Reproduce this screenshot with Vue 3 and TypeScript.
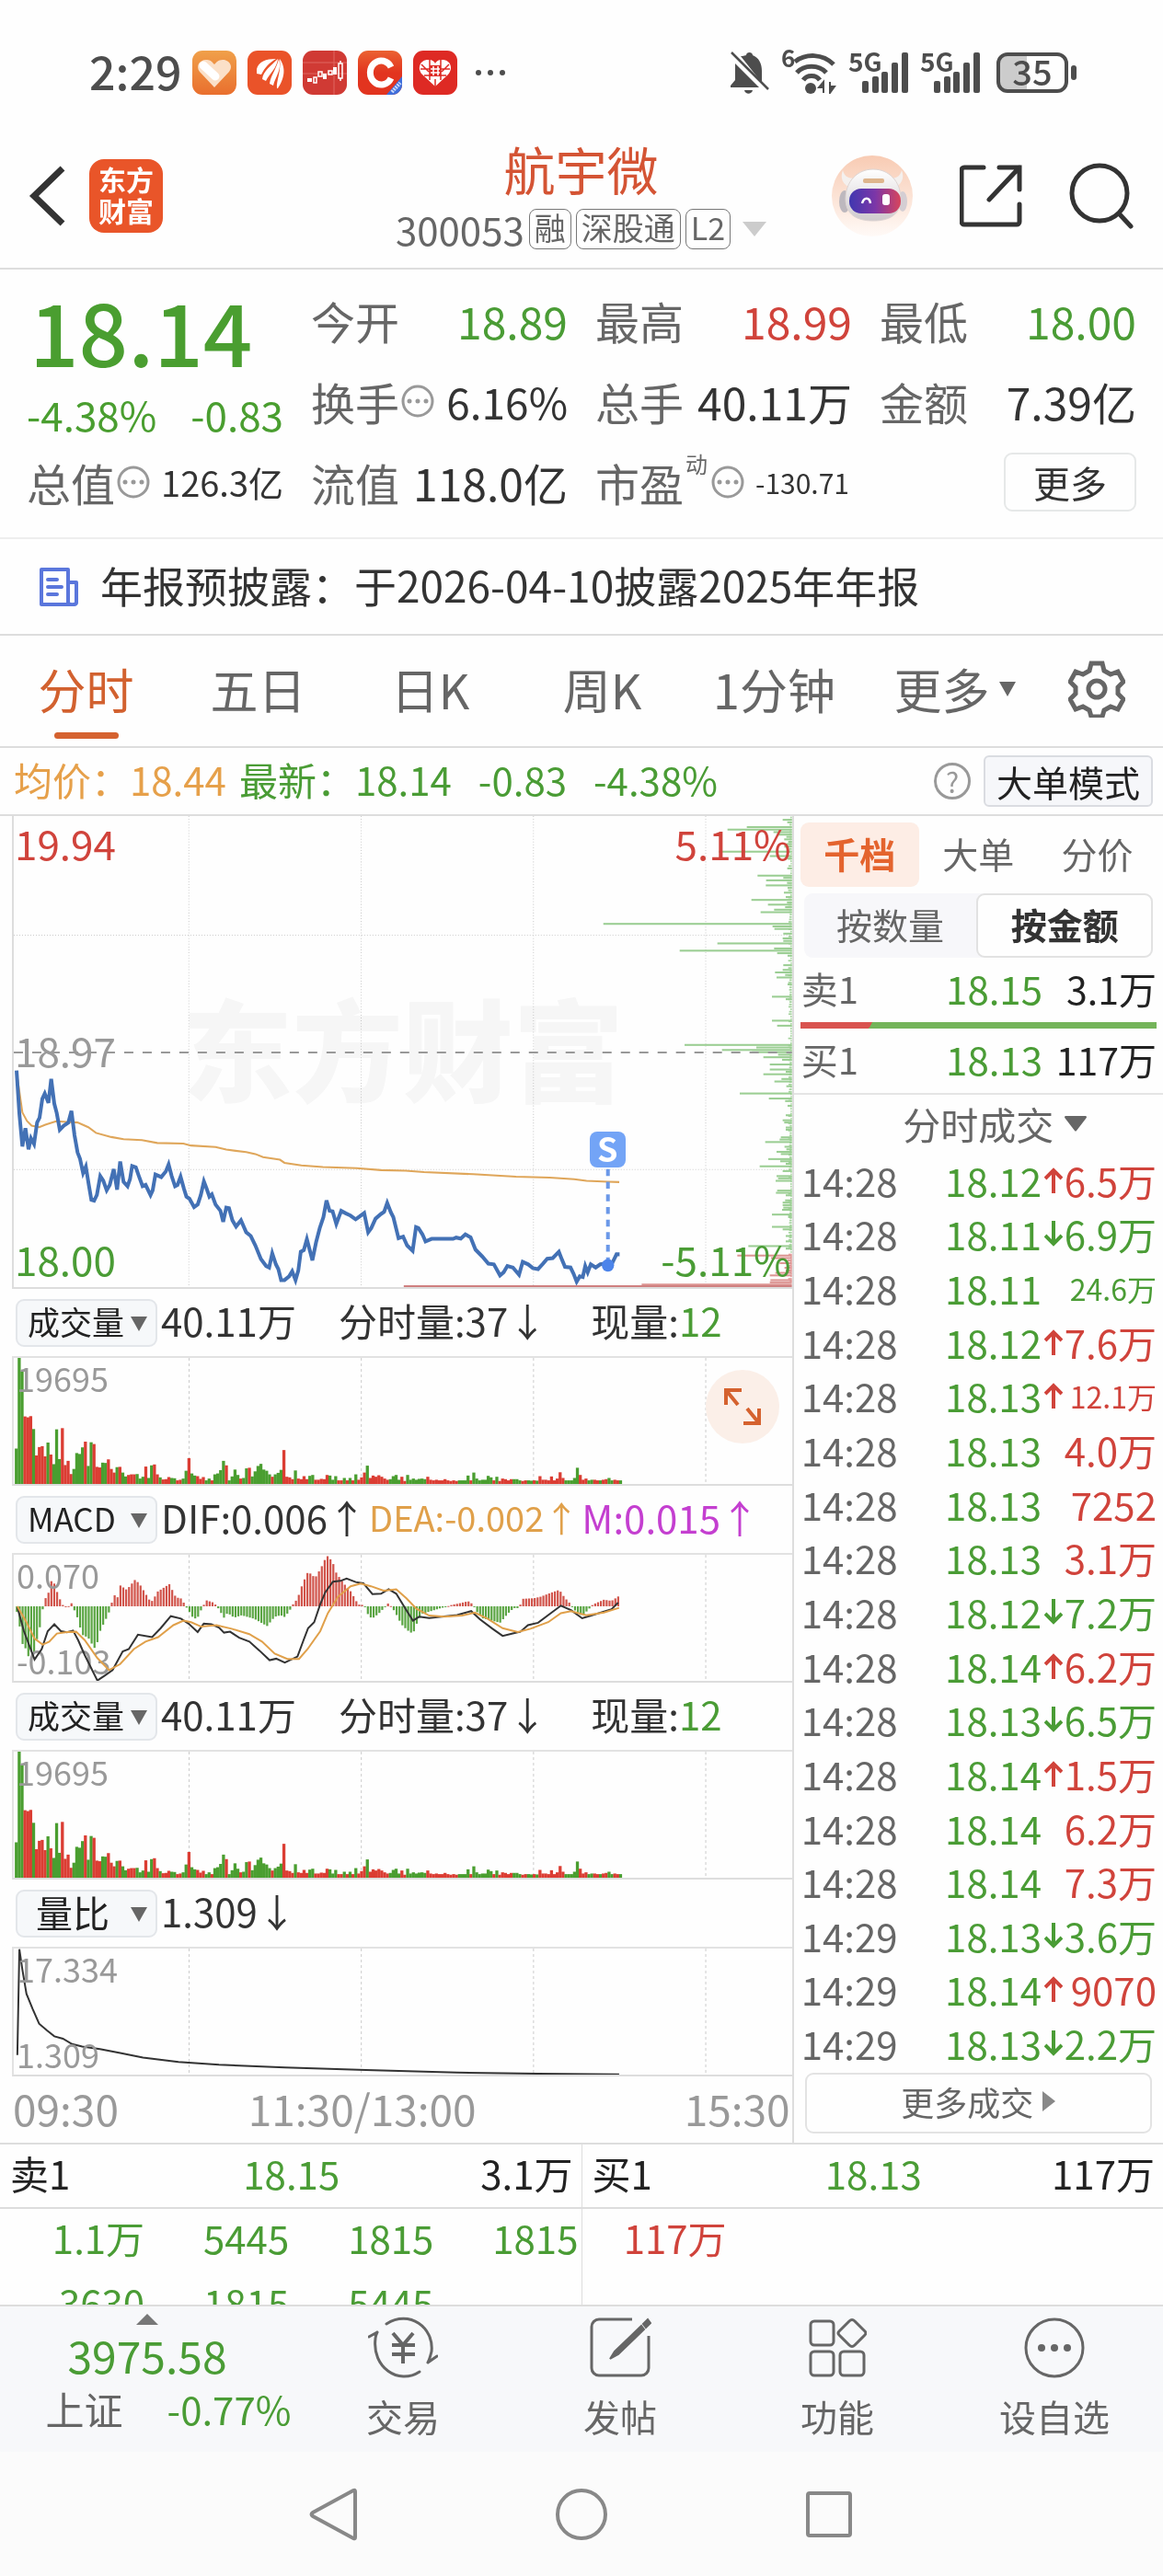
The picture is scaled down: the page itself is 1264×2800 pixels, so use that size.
<script setup lang="ts">
type Tone = 'up' | 'down' | 'flat'

interface Trade {
  time: string
  price: string
  dir: '' | '↑' | '↓'
  amount: string
  tone: Tone
}

const periods = ['分时', '五日', '日K', '周K', '1分钟']

function trade(time: string, price: string, dir: Trade['dir'], amount: string, tone: Tone): Trade {
  return { time, price, dir, amount, tone }
}

const trades: Trade[] = [
  trade('14:28', '18.12', '↑', '6.5万', 'up'),
  trade('14:28', '18.11', '↓', '6.9万', 'down'),
  trade('14:28', '18.11', '', '24.6万', 'down'),
  trade('14:28', '18.12', '↑', '7.6万', 'up'),
  trade('14:28', '18.13', '↑', '12.1万', 'up'),
  trade('14:28', '18.13', '', '4.0万', 'up'),
  trade('14:28', '18.13', '', '7252', 'up'),
  trade('14:28', '18.13', '', '3.1万', 'up'),
  trade('14:28', '18.12', '↓', '7.2万', 'down'),
  trade('14:28', '18.14', '↑', '6.2万', 'up'),
  trade('14:28', '18.13', '↓', '6.5万', 'down'),
  trade('14:28', '18.14', '↑', '1.5万', 'up'),
  trade('14:28', '18.14', '', '6.2万', 'up'),
  trade('14:28', '18.14', '', '7.3万', 'up'),
  trade('14:29', '18.13', '↓', '3.6万', 'down'),
  trade('14:29', '18.14', '↑', '9070', 'up'),
  trade('14:29', '18.13', '↓', '2.2万', 'down'),
]

const sellQueue = ['1.1万', '5445', '1815', '1815', '3630', '1815', '5445']

// Intraday price, in plot units
const priceLine =
  '51,825 60,960 70,1066 80,1008 90,1075 98,1040 108,1058 118,990 126,975 135,915 143,898 155,928 164,852 174,930 182,960 192,1013 205,1000 220,990 230,953 240,1030 250,1085 258,1105 268,1150 277,1130 287,1190 295,1235 304,1238 313,1220 324,1160 334,1175 345,1205 355,1188 368,1138 379,1203 389,1114 400,1178 413,1192 421,1170 428,1128 440,1132 450,1160 462,1192 472,1188 488,1220 495,1205 504,1155 523,1163 538,1145 547,1123 557,1160 568,1192 576,1188 586,1162 597,1200 605,1225 615,1232 630,1258 642,1250 652,1220 662,1177 671,1200 680,1225 688,1218 700,1250 716,1270 725,1305 735,1260 744,1262 755,1300 767,1320 783,1300 800,1338 815,1350 830,1380 848,1423 865,1445 875,1450 885,1405 897,1440 905,1455 914,1490 925,1490 940,1478 950,1462 961,1490 970,1460 978,1400 988,1395 998,1360 1016,1427 1028,1370 1040,1325 1052,1290 1062,1237 1072,1270 1082,1272 1094,1312 1110,1270 1125,1278 1140,1285 1157,1297 1170,1288 1185,1277 1198,1338 1208,1325 1222,1295 1240,1280 1250,1273 1260,1245 1272,1275 1280,1290 1297,1357 1312,1352 1325,1380 1343,1397 1354,1322 1362,1325 1375,1345 1385,1367 1405,1359 1475,1359 1485,1355 1500,1358 1515,1345 1532,1354 1548,1393 1570,1415 1590,1438 1608,1440 1628,1475 1640,1465 1652,1445 1670,1450 1690,1473 1702,1432 1720,1440 1735,1452 1752,1455 1768,1438 1782,1422 1800,1420 1820,1400 1830,1425 1840,1448 1858,1450 1868,1470 1878,1495 1888,1478 1898,1480 1906,1445 1914,1465 1924,1440 1940,1450 1955,1440 1980,1436 1992,1440 2008,1408 2018,1408'

const averageLine =
  '51,830 60,890 70,958 85,985 100,1000 125,1005 145,997 180,986 215,988 250,990 285,1005 310,1023 360,1036 400,1043 460,1046 510,1055 595,1057 620,1063 700,1068 735,1076 800,1084 830,1090 855,1100 910,1108 925,1118 980,1126 1050,1131 1160,1135 1240,1141 1320,1143 1380,1147 1540,1154 1680,1162 1790,1165 1870,1170 1910,1175 1980,1178 2017,1179'

// Resting order size by price level: offset from the top, length from the right edge
const depthPeaks: [number, number][] = [
  [30, 30], [38, 15], [53, 147], [61, 210], [69, 60], [77, 48], [84, 18], [92, 25], [100, 12], [107, 18],
  [115, 25], [131, 238], [145, 72], [153, 15], [184, 15], [207, 112], [214, 28], [222, 84], [230, 16], [238, 85],
  [246, 14], [261, 26], [275, 20], [284, 132], [292, 16], [299, 78], [307, 22], [315, 58], [323, 102], [360, 615],
  [368, 63], [376, 57], [391, 28], [406, 30], [414, 28], [422, 243], [438, 58], [445, 366], [453, 48], [461, 14],
  [491, 28], [506, 30], [514, 55], [522, 22], [530, 50], [552, 14], [591, 65], [599, 20], [667, 65], [683, 48],
  [744, 350], [752, 116], [760, 228], [767, 130], [775, 45], [783, 93], [791, 32], [806, 72], [822, 72], [829, 20],
  [837, 93], [852, 34], [860, 57], [875, 18], [898, 170], [914, 75], [922, 22], [937, 14], [967, 20], [983, 30],
  [990, 25], [1006, 20], [1013, 20], [1037, 36], [1044, 40], [1052, 87], [1067, 24], [1075, 18], [1083, 50],
  [1090, 36], [1106, 77], [1113, 38], [1121, 20], [1129, 105], [1144, 30], [1160, 50], [1167, 45], [1175, 53],
  [1206, 48], [1213, 52], [1221, 20], [1237, 22], [1244, 30], [1252, 30], [1260, 28], [1267, 32], [1282, 65],
  [1290, 12], [1321, 65], [1329, 30], [1350, 20], [1367, 20], [1382, 142], [1390, 20], [1412, 178], [1420, 68],
  [1428, 14], [1436, 40], [1444, 10], [1451, 24], [1459, 20], [1467, 54], [1475, 72], [1490, 70], [1497, 72],
  [1504, 490],
]
const minorSizes = [5, 11, 7, 4, 9, 12, 5, 8]
const minorLevels = Array.from({ length: 192 }, (_, i) => ({
  y: 20 + i * 7.7,
  len: minorSizes[(i * 5 + (i >> 2)) % 8],
}))
const BUY_FROM = 1404

// One entry per minute: colour letter and height
const volumes =
  'g118 g420 g375 r225 r222 r226 g183 r95 r123 r126 r92 g138 r98 g66 g182 g83 r186 r63 r77 r33 g50 g103 g100 g122 r141 g60 g139 r133 r57 r55 g71 g70 r82 r50 r38 g56 r57 g38 g25 r30 r32 r32 g33 g18 g24 r58 g20 g62 r65 r32 g22 r15 r16 r23 g20 g19 r12 r14 g18 g44 r86 g35 g28 r26 r17 r23 g12 g18 r12 g32 g35 g46 g77 r62 g12 g25 g48 g30 r18 g20 g52 r54 g25 g42 g60 g67 g48 g44 g32 r24 g32 g37 g47 r113 r24 r22 r16 g45 r18 r16 r26 r16 g27 g30 r14 r14 r17 r16 r30 g28 g14 g26 r12 r12 g20 r12 g20 r12 g32 r14 r22 r38 g61 r20 r28 r24 r29 r24 r18 r14 g16 g26 g30 g14 r24 r10 g30 g14 g18 g14 g17 g18 g16 r24 r14 r12 r14 r12 r12 r16 r12 r10 r12 r10 g12 g12 g12 g28 r12 g38 g18 g12 g14 g14 g27 g22 r12 g24 r10 r18 r16 r12 r16 g16 g16 g12 r10 r12 g12 g11 r12 g11 r26 r14 r14 r12 r25 r12 r18 r39 r20 g12 g12 g12 g20 g54 r30 r14 r18 g12 g14 r14 r12 g12 r14 r16 g20 g12 r14 r12 g12'
    .split(' ')
    .map((s, i) => ({ x: 27 + i * 5.68, h: Number(s.slice(1)), up: s[0] === 'r' }))

const macdKeys: [number, number][] = [
  [30, -10], [36, -60], [42, -125], [48, -140], [54, -168], [60, -150], [65, -158], [70, -115], [76, -75], [81, -18],
  [87, 25], [93, 42], [99, 84], [104, 80], [110, 50], [116, 24], [122, 4], [132, -3], [138, 14], [142, -3],
  [150, -35], [160, -95], [172, -105], [184, -140], [190, -120], [196, -80], [212, -25], [217, 4], [223, 38],
  [230, 30], [235, 70], [248, 55], [265, 90], [275, 70], [295, 15], [300, 20], [308, 48], [332, 74], [345, 30],
  [358, 25], [362, 4], [368, -8], [380, -42], [388, -38], [396, -8], [405, 20], [420, 12], [428, -5], [440, -38],
  [447, -22], [460, -38], [475, -30], [500, -42], [525, -66], [540, -35], [552, -30], [560, -36], [572, -8],
  [575, 4], [585, 25], [595, 75], [606, 116], [620, 95], [632, 130], [643, 170], [654, 150], [662, 110], [677, 75],
  [690, 50], [705, 6], [717, 4], [722, -22], [732, -42], [745, -25], [757, -4], [763, 10], [768, 4], [778, -20],
  [790, -60], [802, -80], [813, -92], [820, -60], [830, -25], [845, -18], [868, -6], [880, -1], [890, 5], [905, 10],
  [922, 17], [932, 6], [938, -16], [950, -40], [985, -55], [1000, -25], [1012, -6], [1022, -6], [1030, 25],
  [1052, 27], [1065, 32], [1085, 45], [1102, 55], [1112, 30], [1125, 6], [1130, -10], [1147, -32], [1160, -10],
  [1168, 6], [1190, 22], [1205, 18], [1221, 36],
]

function macdAt(x: number): number {
  const k = macdKeys.findIndex(([kx]) => kx >= x)
  if (k <= 0) return macdKeys[0][1]
  const [x0, v0] = macdKeys[k - 1]
  const [x1, v1] = macdKeys[k]
  return v0 + ((v1 - v0) * (x - x0)) / (x1 - x0)
}
const macdBars = Array.from({ length: 210 }, (_, i) => {
  const x = 31 + i * 5.68
  return { x, v: macdAt(x) }
})

const difLine =
  '32,1040 45,1120 66,1215 80,1180 92,1120 105,1097 118,1120 130,1124 142,1118 152,1150 165,1200 190,1285 205,1268 220,1250 240,1188 252,1180 270,1132 298,1140 315,1110 335,1070 355,1078 370,1095 388,1123 400,1095 415,1097 430,1108 440,1125 452,1122 470,1142 490,1155 510,1185 530,1217 543,1212 560,1225 585,1205 597,1150 606,1110 618,1090 630,1030 640,990 655,955 670,952 682,944 700,956 715,960 733,996 750,995 765,980 780,995 800,1050 813,1085 825,1072 845,1076 870,1072 900,1066 928,1053 945,1080 970,1112 990,1136 1010,1128 1025,1122 1040,1100 1060,1092 1085,1060 1105,1035 1125,1050 1147,1077 1165,1068 1205,1047 1218,1025'
const deaLine =
  '32,1037 50,1090 66,1145 82,1165 95,1155 110,1128 130,1123 148,1122 165,1150 190,1210 213,1250 235,1230 262,1180 285,1155 310,1140 340,1100 360,1085 375,1090 395,1105 425,1100 455,1112 490,1130 515,1155 540,1195 565,1213 588,1213 605,1180 630,1120 645,1060 665,1005 690,970 710,961 730,970 755,985 780,980 800,1010 820,1045 845,1068 875,1072 910,1068 935,1058 960,1078 990,1110 1020,1123 1045,1112 1080,1090 1105,1060 1125,1053 1155,1067 1190,1058 1220,1042'
const ratioLine =
  '32,356 36,2 42,71 50,151 62,201 75,251 90,273 105,293 122,301 140,319 160,327 195,336 235,349 280,364 350,379 430,388 560,397 720,406 900,414 1060,418 1220,420'

const panels = [
  { kind: 'volume', name: '成交量', high: '19695', low: '' },
  { kind: 'macd', name: 'MACD', high: '0.070', low: '-0.103' },
  { kind: 'volume', name: '成交量', high: '19695', low: '' },
  { kind: 'ratio', name: '量比', high: '17.334', low: '1.309' },
]
const gridX = [371, 711, 1051, 1391]
</script>

<template>
  <div class="app">
    <header class="status">
      <div class="status-left">
        <span class="clock">2:29</span>
        <svg class="app-icon" viewBox="0 0 48 48"><defs><linearGradient id="heart-bg" x1="0" y1="0" x2="0" y2="1"><stop offset="0" stop-color="#f0a04a" /><stop offset="1" stop-color="#e96f2e" /></linearGradient></defs><rect width="48" height="48" rx="11" fill="url(#heart-bg)" /><path d="M24 40 8 23C3 16 9 9 16 10c4 0 6 3 8 5 2-2 4-5 9-5 7 0 12 7 7 13z" fill="#fbe0c8" /><path d="M12 16 25 28" stroke="#fff" stroke-width="9" stroke-linecap="round" /></svg>
        <svg class="app-icon" viewBox="0 0 48 48"><rect width="48" height="48" rx="11" fill="#ea5329" /><g fill="#fff"><path d="M10 20C12 12 20 9 31 9 24 13 19 18 15 26L10 25z" /><path d="M16 31C17 22 26 16 33 9 32 19 24 25 20 33z" /><path d="M24 36C25 27 31 21 34 9 38 20 30 29 28 38z" /><path d="M32 41C31 33 37 22 35 9 43 20 39 32 33 41z" /></g></svg>
        <svg class="app-icon" viewBox="0 0 48 48"><rect width="48" height="48" rx="11" fill="#d03a34" /><path d="M0 13h48M0 25h48M34 0v48" stroke="#df6660" stroke-width="1" /><g fill="#fff"><path d="M5 30h5v4H5zM22 25h4v6h-4zM33 18h4v8h-4z" /></g><g fill="none" stroke="#fff" stroke-width="1.500"><path d="M12 29h3v6h-3zM17 23h4v5h-4zM28 22h4v4h-4zM39 14h4v16h-4zM41 11v3M41 30v3" /></g></svg>
        <svg class="app-icon" viewBox="0 0 48 48"><defs><linearGradient id="c-bg" x1="0" y1="0" x2="0" y2="1"><stop offset="0" stop-color="#eb6232" /><stop offset=".5" stop-color="#e2341f" /></linearGradient><clipPath id="c-clip"><rect width="48" height="48" rx="11" /></clipPath></defs><g clip-path="url(#c-clip)"><rect width="48" height="48" fill="url(#c-bg)" /><path d="M36 18a12 13 0 1 0 0 12" fill="none" stroke="#fff" stroke-width="7" /><path d="M48 28v20H31z" fill="#3e6fdc" /><path d="M37 45l9-10" stroke="#c8d8fa" stroke-width="4" stroke-dasharray="2 1" /></g></svg>
        <svg class="app-icon" viewBox="0 0 48 48"><rect width="48" height="48" rx="11" fill="#de2a24" /><path d="M24 39 10 26C3 18 9 9 17 10c4 0 6 2 7 4 1-2 3-4 7-4 8-1 14 8 7 16z" fill="#fff" /><path d="M8 20h32M12 27h24M18 10v22M30 10v22M24 31v8M9 15l8 8M39 15l-8 8" stroke="#de2a24" stroke-width="1.500" /><path d="M18 16h12v12H18z" fill="#de2a24" /><path d="M19 20h10M19 24h10M22 17v10M27 17v10" stroke="#fff" stroke-width="1.500" /></svg>
        <svg class="more-dots" viewBox="0 0 32 8"><circle cx="3" cy="4" r="3" /><circle cx="16" cy="4" r="3" /><circle cx="29" cy="4" r="3" /></svg>
      </div>
      <div class="status-right">
        <svg width="42" height="48" viewBox="0 0 42 48" fill="#4d4d4d"><path d="M11 6 34 35V22c0-8-3-14-10-17 0-4-7-4-7 0l-4 1zM5 14v18l-5 6v2h31zM15 43h9c-1 5-8 5-9 0z" /><path d="M1 2 41 42" stroke="#4d4d4d" stroke-width="2.500" /></svg>
        <div class="wifi"><span class="tiny">6</span><svg width="46" height="46" viewBox="0 0 46 46"><g fill="none" stroke="#4d4d4d" stroke-width="5"><path d="M1 11c12-9 30-9 42 3" /><path d="M3 23c8-9 24-9 32 0" stroke-width="5" /><path d="M10 31c4-6 14-6 18 0" /></g><circle cx="18" cy="40" r="6" fill="#4d4d4d" /><path d="M32 45V33l-5 6h5M39 33v12l5-7h-5" fill="#4d4d4d" stroke="#4d4d4d" stroke-width="2" /></svg></div>
        <div v-for="n in 2" :key="n" class="cell"><span class="tiny">5G</span><svg width="50" height="46" viewBox="0 0 50 46" fill="#4d4d4d"><rect y="32" width="7" height="13" rx="2" /><rect x="11" y="27" width="7" height="18" rx="2" /><rect x="21" y="22" width="7" height="23" rx="2" /><rect x="32" y="12" width="7" height="33" rx="2" /><rect x="43" y="1" width="7" height="44" rx="2" /></svg></div>
        <div class="battery"><span>35</span></div>
      </div>
    </header>

    <div class="topbar">
      <div class="top-left">
        <button class="plain" aria-label="返回"><svg width="42" height="68" viewBox="0 0 42 68"><path d="M37 4 6 34 37 64" fill="none" stroke="#333" stroke-width="7" /></svg></button>
        <a class="logo" href="#">东方<br />财富</a>
      </div>
      <div class="title">
        <h1>航宇微</h1>
        <div class="code"><span class="num">300053</span><span class="badge">融</span><span class="badge">深股通</span><span class="badge">L2</span><svg class="code-arrow" width="26" height="16" viewBox="0 0 26 16"><path d="M0 0h26L13 16z" fill="#ccc" /></svg></div>
      </div>
      <div class="top-right">
        <button class="plain" aria-label="智能助手">
          <svg width="88" height="88" viewBox="0 0 88 88"><defs><linearGradient id="halo" x1="0" y1="0" x2="0" y2="1"><stop offset="0" stop-color="#f8cbb3" /><stop offset="1" stop-color="#fffaf7" /></linearGradient><linearGradient id="visor"><stop offset="0" stop-color="#4038b0" /><stop offset=".5" stop-color="#7b36a8" /><stop offset="1" stop-color="#d8455c" /></linearGradient><linearGradient id="helmet" x1="0" y1="0" x2="0" y2="1"><stop offset="0" stop-color="#fff" /><stop offset="1" stop-color="#cfcacd" /></linearGradient></defs><circle cx="44" cy="44" r="44" fill="url(#halo)" /><path d="M12 16c-3 8-1 16 10 20L28 24C20 26 14 24 12 16zM76 16c3 8 1 16-10 20L60 24c8 2 14 0 16-8z" fill="#f4f0ee" /><ellipse cx="14" cy="50" rx="6" ry="12" fill="#bdb8be" /><ellipse cx="77" cy="50" rx="5" ry="11" fill="#d4ced3" /><path d="M45 15c17 0 30 13 30 32 0 17-12 24-30 24S15 64 15 47c0-19 13-32 30-32z" fill="url(#helmet)" stroke="#ddd4d2" /><rect x="34" y="25" width="23" height="5" rx="2" fill="#deb58d" /><rect x="19" y="36" width="56" height="27" rx="13" fill="url(#visor)" /><path d="M33 52c2-7 8-7 9 0" fill="none" stroke="#fff" stroke-width="2.500" /><rect x="55" y="42" width="8" height="12" rx="3" fill="#fff" /></svg>
        </button>
        <button class="plain" aria-label="分享"><svg width="68" height="68" viewBox="0 0 68 68"><path d="M26 3H5a3 3 0 0 0-3 3v56a3 3 0 0 0 3 3h57a3 3 0 0 0 3-3V43M65 27V3H43M65 3 32 38" fill="none" stroke="#333" stroke-width="5" stroke-linecap="round" /></svg></button>
        <button class="plain" aria-label="搜索"><svg width="70" height="72" viewBox="0 0 70 72"><circle cx="33" cy="33" r="30" fill="none" stroke="#333" stroke-width="5" /><path d="M54 55 67 69" stroke="#333" stroke-width="5" stroke-linecap="round" /></svg></button>
      </div>
    </div>

    <section class="quote">
      <div class="last">
        <div class="price">18.14</div>
        <div class="change"><span>-4.38%</span><span>-0.83</span></div>
      </div>
      <div class="cellq"><span>今开</span><b class="down">18.89</b></div>
      <div class="cellq"><span>最高</span><b class="up">18.99</b></div>
      <div class="cellq"><span>最低</span><b class="down">18.00</b></div>
      <div class="cellq"><span>换手</span><svg class="info" viewBox="0 0 36 36"><circle cx="18" cy="18" r="16" /><path d="M9 18h0M18 18h0M27 18h0" /></svg><b class="turn">6.16%</b></div>
      <div class="cellq"><span>总手</span><b>40.11万</b></div>
      <div class="cellq"><span>金额</span><b>7.39亿</b></div>
      <div class="cellq"><span>总值</span><svg class="info" viewBox="0 0 36 36"><circle cx="18" cy="18" r="16" /><path d="M9 18h0M18 18h0M27 18h0" /></svg><b class="mid">126.3亿</b></div>
      <div class="cellq"><span>流值</span><b>118.0亿</b></div>
      <div class="cellq"><span>市盈</span><sup>动</sup><svg class="info" viewBox="0 0 36 36"><circle cx="18" cy="18" r="16" /><path d="M9 18h0M18 18h0M27 18h0" /></svg><b class="small">-130.71</b></div>
      <div class="cellq"><button class="more">更多</button></div>
    </section>

    <a class="notice" href="#">
      <svg width="42" height="42" viewBox="0 0 42 42" fill="none" stroke="#5a76dc" stroke-width="4" stroke-linejoin="round"><path d="M33 40H2V2h29v36c0 3 9 3 9 0V16h-8M9 13h10M9 21h15M9 29h10" stroke-linecap="round" /></svg>
      <span>年报预披露：于2026-04-10披露2025年年报</span>
    </a>

    <nav class="periods">
      <button v-for="(p, i) in periods" :key="p" :class="['period', { on: i === 0 }]">{{ p }}</button>
      <button class="period wide">更多<svg width="18" height="16" viewBox="0 0 18 16"><path d="M0 0h18L9 16z" fill="#666" /></svg></button>
      <button class="period gear" aria-label="设置">
        <svg width="62" height="62" viewBox="0 0 62 62" fill="none" stroke="#666" stroke-width="5"><path d="M25 3h12l2 8 7 4 8-3 6 11-6 6v7l6 6-6 11-8-3-7 4-2 7H25l-2-7-7-4-8 3-6-11 6-6v-7l-6-6 6-11 8 3 7-4z" /><circle cx="31" cy="31" r="9" /></svg>
      </button>
    </nav>

    <div class="summary">
      <span class="avg">均价：18.44</span>
      <span class="down">最新：18.14</span>
      <span class="down delta">-0.83</span>
      <span class="down delta">-4.38%</span>
      <button class="help" aria-label="说明">?</button>
      <button class="bigmode">大单模式</button>
    </div>

    <main class="board">
      <div class="charts">
        <div class="main-chart">
          <svg viewBox="42 18 2538 1494" preserveAspectRatio="none" class="plot">
            <g stroke="#ccc" stroke-width="3" stroke-dasharray="3 6">
              <path d="M613 18V1512M1175 18V1512M1737 18V1512M2299 18V1512M42 396H2580M42 1139H2580" />
            </g>
            <rect v-for="(l, i) in minorLevels" :key="'m' + i" :x="2580 - l.len" :y="l.y" :width="l.len" height="5" :fill="l.y > BUY_FROM ? '#e6a3a2' : '#a3d29c'" />
            <rect v-for="[y, len] in depthPeaks" :key="y" :x="2580 - len" :y="y - 3" :width="len" height="6" :fill="y > BUY_FROM ? '#dd9593' : '#9bce93'" />
          </svg>
          <div class="watermark">东方财富</div>
          <span class="axis tl up">19.94</span>
          <span class="axis tr up">5.11%</span>
          <span class="axis ml">18.97</span>
          <span class="axis bl down">18.00</span>
          <span class="axis br down">-5.11%</span>
          <svg viewBox="42 18 2538 1494" preserveAspectRatio="none" class="plot over">
            <path d="M42 768H2580" stroke="#999" stroke-width="6" stroke-dasharray="30 30" />
            <polyline :points="averageLine" fill="none" stroke="#dfa65a" stroke-width="6" />
            <polyline :points="priceLine" fill="none" stroke="#4371b5" stroke-width="12" />
            <path d="M1980 1138V1430" stroke="#6b98e8" stroke-width="12" stroke-dasharray="22 18" />
            <circle cx="1980" cy="1443" r="20" fill="#4c84ea" />
            <path d="M1314 1509H2580" stroke="#cf8080" stroke-width="6" />
          </svg>
          <span class="marker">S</span>
        </div>

        <section v-for="(p, i) in panels" :key="i" class="panel">
          <div class="panel-head">
            <div class="picker">
              <select :aria-label="'指标 ' + (i + 1)" :class="{ roomy: p.kind === 'ratio' }"><option>{{ p.name }}</option></select>
              <svg width="18" height="16" viewBox="0 0 18 16"><path d="M0 0h18L9 16z" fill="#666" /></svg>
            </div>
            <template v-if="p.kind === 'volume'">
              <span class="stat first">40.11万</span>
              <span class="stat second">分时量:37↓</span>
              <span class="stat">现量:<span class="down">12</span></span>
            </template>
            <template v-else-if="p.kind === 'macd'">
              <span class="stat macd">DIF:0.006↑</span>
              <span class="stat macd dea">DEA:-0.002↑</span>
              <span class="stat macd m">M:0.015↑</span>
            </template>
            <span v-else class="stat">1.309↓</span>
          </div>
          <div class="panel-plot">
            <svg v-if="p.kind === 'volume'" class="plot" viewBox="25 0 1536 420" preserveAspectRatio="none">
              <path v-for="x in gridX" :key="x" :d="`M${x} 0V420`" class="grid" />
              <rect v-for="(v, k) in volumes" :key="k" :x="v.x" :y="420 - v.h" width="6" :height="v.h" :fill="v.up ? '#db3d33' : '#4a9e30'" />
            </svg>
            <svg v-else-if="p.kind === 'macd'" class="plot" viewBox="25 865 1536 421" preserveAspectRatio="none">
              <path v-for="x in gridX" :key="x" :d="`M${x} 865V1286`" class="grid" />
              <rect v-for="(b, k) in macdBars" :key="k" :x="b.x - 2" :y="b.v > 0 ? 1037 - b.v : 1037" width="4" :height="Math.max(3, Math.abs(b.v))" :fill="b.v > 0 ? '#d1544b' : '#5aa543'" />
            </svg>
            <svg v-else class="plot" viewBox="25 0 1536 421" preserveAspectRatio="none">
              <path v-for="x in gridX" :key="x" :d="`M${x} 0V421`" class="grid" />
              <polyline :points="ratioLine" class="thin" stroke="#333" />
            </svg>
            <span class="scale top">{{ p.high }}</span>
            <span v-if="p.low" class="scale bottom">{{ p.low }}</span>
            <svg v-if="p.kind === 'macd'" class="plot over" viewBox="25 865 1536 421" preserveAspectRatio="none">
              <polyline :points="difLine" class="thin" stroke="#333" />
              <polyline :points="deaLine" class="thin" stroke="#e0a04a" />
            </svg>
            <button v-if="i === 0" class="expand" aria-label="全屏">
              <svg width="42" height="42" viewBox="0 0 42 42" fill="none" stroke="#d5622f" stroke-width="4"><path d="M3 19V3h17M3 3l13 16M39 23v16H22M39 39 26 23" /></svg>
            </button>
          </div>
        </section>
        <div class="hours"><span>09:30</span><span>11:30/13:00</span><span>15:30</span></div>
      </div>

      <aside class="side">
        <div class="side-tabs"><button class="on">千档</button><button>大单</button><button>分价</button></div>
        <div class="segment"><button>按数量</button><button class="on">按金额</button></div>
        <div class="best"><span>卖1</span><b class="down">18.15</b><em>3.1万</em></div>
        <div class="ratio"></div>
        <div class="best"><span>买1</span><b class="down">18.13</b><em>117万</em></div>
        <button class="deals-head">分时成交<svg width="24" height="17" viewBox="0 0 24 17"><path d="M1 0h22q2 1 0 3L13 16q-1 1-2 0L1 3q-2-2 0-3z" fill="#666" /></svg></button>
        <table class="deals">
          <tbody>
            <tr v-for="(t, i) in trades" :key="i">
              <td class="time">{{ t.time }}</td>
              <td class="down cost">{{ t.price }}</td>
              <td :class="['dir', t.tone]">
                <svg v-if="t.dir" :aria-label="t.dir" width="20" height="28" viewBox="0 0 20 28"><path :d="t.dir === '↑' ? 'M10 28V3M1 12l9-9 9 9' : 'M10 0v25M1 16l9 9 9-9'" fill="none" stroke="currentColor" stroke-width="4" /></svg>
              </td>
              <td :class="['amount', t.tone, { long: t.amount.length > 4 }]">{{ t.amount }}</td>
            </tr>
          </tbody>
        </table>
        <button class="more-deals">更多成交<svg width="14" height="22" viewBox="0 0 14 22"><path d="M0 0 14 11 0 22z" fill="#888" /></svg></button>
      </aside>
    </main>

    <section class="queues">
      <div class="queue">
        <div class="queue-head"><span>卖1</span><b class="down">18.15</b><em>3.1万</em></div>
        <div class="lots down"><span v-for="(q, i) in sellQueue" :key="i">{{ q }}</span></div>
      </div>
      <div class="queue">
        <div class="queue-head"><span>买1</span><b class="down">18.13</b><em>117万</em></div>
        <div class="lots up"><span>117万</span></div>
      </div>
    </section>

    <nav class="dock">
      <button class="index">
        <svg width="24" height="12" viewBox="0 0 24 12"><path d="M12 0 24 12H0z" fill="#777" /></svg>
        <span class="points down">3975.58</span>
        <span class="index-row"><span>上证</span><span class="down">-0.77%</span></span>
      </button>
      <button class="item">
        <svg width="76" height="68" viewBox="0 0 76 68" fill="none" stroke="#666" stroke-width="3"><path d="M20 8C45-8 72 12 69 38M69 38q-2 8-4 12M56 60C33 75 4 55 8 24M8 24q0-3 2-7M65 50l10-7M10 17 1 22" stroke-linecap="round" /><path d="M27 18l11 13 11-13M26 31h25M26 41h25M38 31v20" stroke-width="4" /></svg>
        <span>交易</span>
      </button>
      <button class="item">
        <svg width="68" height="68" viewBox="0 0 68 68"><path d="M47 3H11a8 8 0 0 0-8 8v45a8 8 0 0 0 8 8h46a8 8 0 0 0 8-8V21" fill="none" stroke="#666" stroke-width="3" /><path d="M57 10 28 38l-5 8 9-5L60 14zM59 8l5-5 3 4-5 5z" fill="#666" stroke="#666" stroke-width="2" /></svg>
        <span>发帖</span>
      </button>
      <button class="item">
        <svg width="64" height="68" viewBox="0 0 64 68" fill="none" stroke="#666" stroke-width="3"><rect x="3" y="5" width="25" height="26" rx="4" /><rect x="3" y="38" width="25" height="26" rx="4" /><rect x="35" y="38" width="26" height="26" rx="4" /><path d="M45 5q3-3 6 0l11 11q2 2 0 4L51 31q-3 3-6 0L34 20q-2-2 0-4z" /></svg>
        <span>功能</span>
      </button>
      <button class="item">
        <svg width="68" height="68" viewBox="0 0 68 68"><circle cx="34" cy="34" r="31" fill="none" stroke="#666" stroke-width="3" /><g fill="#666"><circle cx="20" cy="34" r="4" /><circle cx="34" cy="34" r="4" /><circle cx="48" cy="34" r="4" /></g></svg>
        <span>设自选</span>
      </button>
    </nav>

    <footer class="sysnav">
      <button class="plain" aria-label="后退"><svg width="60" height="60" viewBox="0 0 60 60"><path d="M53 5v50q0 2-2 1L7 32q-3-2 0-4L51 4q2-1 2 1z" fill="none" stroke="#888" stroke-width="4" /></svg></button>
      <button class="plain" aria-label="主屏幕"><svg width="60" height="60" viewBox="0 0 60 60"><circle cx="30" cy="30" r="26" fill="none" stroke="#888" stroke-width="4" /></svg></button>
      <button class="plain" aria-label="最近任务"><svg width="60" height="60" viewBox="0 0 60 60"><rect x="7" y="7" width="46" height="46" rx="2" fill="none" stroke="#888" stroke-width="4" /></svg></button>
    </footer>
  </div>
</template>

<style>
body { background: #fff; }
</style>

<style scoped>
.app {
  font-family: "Noto Sans CJK SC", "Noto Sans", sans-serif;
  color: #333;
  background: #fefefe;
  font-size: 42px;
  line-height: 1;
  white-space: nowrap;
  overflow: hidden;
}
.app *, .app { box-sizing: border-box; }
button, select {
  font: inherit;
  color: inherit;
  background: none;
  border: 0;
  padding: 0;
  margin: 0;
}
b, em { font-weight: 400; font-style: normal; }
svg { display: block; flex: none; }
a { color: inherit; text-decoration: none; }
.up { color: #d0433b; }
.down { color: #4a9c35; }
.plain { display: block; }

.status { display: flex; justify-content: space-between; align-items: center; padding: 54px 103px 30px 97px; height: 134px; color: #4d4d4d; }
.status-left { display: flex; align-items: center; gap: 12px; }
.clock { font-size: 50px; font-weight: 500; line-height: 50px; padding-bottom: 6px; }
.app-icon { width: 48px; height: 48px; }
.more-dots { width: 32px; height: 8px; margin-left: 8px; fill: #4d4d4d; }
.status-right { display: flex; align-items: center; gap: 13px; }
.tiny { position: absolute; left: 0; top: -4px; font-size: 28px; font-weight: 700; line-height: 28px; }
.wifi { position: relative; padding-left: 14px; }
.wifi .tiny { top: -8px; font-size: 26px; }
.cell { position: relative; padding-left: 15px; }
.battery {
  position: relative; width: 78px; height: 44px; margin-left: 5px;
  border: 4px solid #4d4d4d; border-radius: 12px;
  background: linear-gradient(90deg, #ccc 42%, #fefefe 42%);
  font-size: 38px; font-weight: 500; line-height: 32px; text-align: center;
}
.battery::after { content: ""; position: absolute; right: -13px; top: 10px; width: 6px; height: 16px; border-radius: 3px; background: #4d4d4d; }

.topbar { display: grid; grid-template-columns: 1fr auto 1fr; align-items: center; height: 159px; padding: 0 32px 0 31px; border-bottom: 2px solid #ddd; }
.top-left { display: flex; align-items: center; gap: 24px; }
.logo { width: 80px; height: 80px; border-radius: 16px; background: #e95529; color: #fff; font-size: 30px; font-weight: 700; line-height: 34px; text-align: center; padding-top: 4px; }
.title { text-align: center; }
h1 { margin: 0 0 16px; font-size: 56px; font-weight: 400; line-height: 56px; color: #d45434; }
.code { display: flex; align-items: center; justify-content: center; gap: 5px; color: #666; line-height: 44px; }
.badge { font-size: 34px; line-height: 38px; height: 44px; padding: 0 5px; border: 1px solid #777; border-radius: 8px; }
.code-arrow { margin-left: 8px; }
.top-right { display: flex; align-items: center; justify-content: flex-end; gap: 51px; }

.quote { display: grid; grid-template-columns: repeat(4, minmax(0, 1fr)); column-gap: 30px; grid-auto-rows: 88px; padding: 11px 29px 16px; border-bottom: 2px solid #eee; font-size: 48px; }
.last { grid-row: span 2; color: #4a9e30; }
.price { font-size: 94px; font-weight: 500; line-height: 108px; padding-left: 3px; }
.change { display: flex; justify-content: space-between; font-size: 44px; line-height: 76px; }
.cellq { display: flex; align-items: center; }
.cellq > span { color: #666; }
.cellq b { margin-left: auto; }
.cellq b.turn { font-size: 46px; }
.cellq b.mid { font-size: 38px; }
.cellq b.small { font-size: 30px; margin-right: 3px; }
.cellq sup { align-self: flex-start; font-size: 24px; line-height: 24px; padding-top: 12px; color: #666; margin: 0 2px; }
.info { width: 36px; height: 36px; margin-left: 2px; fill: none; stroke: #999; stroke-width: 3; }
.info path { stroke-width: 5; stroke-linecap: round; }
.more { margin-left: auto; width: 144px; height: 64px; border: 2px solid #e6e8e8; border-radius: 9px; font-size: 40px; line-height: 52px; }

.notice { display: flex; align-items: center; gap: 24px; height: 105px; padding: 0 43px; border-bottom: 2px solid #ddd; font-size: 46px; }
.notice span { padding-bottom: 6px; }

.periods { display: flex; height: 122px; padding-right: 20px; border-bottom: 2px solid #ddd; }
.period { position: relative; flex: 187 1 0; display: flex; align-items: center; justify-content: center; font-size: 52px; color: #666; padding-bottom: 4px; }
.period.on { color: #d2612f; }
.period.on::after { content: ""; position: absolute; left: 50%; bottom: 8px; width: 70px; height: 7px; margin-left: -35px; border-radius: 4px; background: #d5622f; }
.period.wide { flex-grow: 205; gap: 10px; }
.period.gear { flex-grow: 104; }

.summary { display: flex; align-items: center; height: 74px; padding: 0 11px 0 15px; border-bottom: 2px solid #ddd; gap: 14px; line-height: 60px; }
.summary > span { padding-bottom: 5px; }
.summary .delta { margin-left: 15px; }
.avg { color: #e6a04a; }
.help { margin-left: auto; width: 40px; height: 40px; border: 3px solid #999; border-radius: 50%; color: #999; font-size: 30px; line-height: 30px; }
.bigmode { width: 184px; height: 56px; border: 2px solid #dadce1; border-radius: 6px; background: #f6f7fa; font-size: 39px; line-height: 48px; color: #222; }

.board { display: flex; align-items: stretch; border-bottom: 2px solid #ddd; }
.charts { flex: 862 1 0; min-width: 0; border-right: 2px solid #ddd; }
.main-chart { position: relative; margin-left: 13px; height: 514px; border-left: 2px solid #ddd; border-bottom: 2px solid #ddd; }
.plot { display: block; width: 100%; height: 100%; }
.over { position: absolute; inset: 0; }
.watermark { position: absolute; left: 0; right: 0; top: 180px; text-align: center; font-size: 120px; line-height: 140px; font-weight: 900; color: #f7f7f7; mix-blend-mode: multiply; }
.marker { position: absolute; left: 74%; top: 67%; width: 39px; height: 39px; border-radius: 8px; background: #73a4f6; color: #fff; font-size: 36px; font-weight: 700; line-height: 34px; text-align: center; }
.axis { position: absolute; font-size: 44px; line-height: 44px; }
.tl { left: 1px; top: 7px; }
.tr { right: 1px; top: 7px; }
.ml { left: 1px; top: 232px; color: #999; }
.bl { left: 1px; bottom: 9px; }
.br { right: 1px; bottom: 9px; }

.panel-head { display: flex; align-items: center; height: 73px; padding-left: 17px; line-height: 60px; }
.picker { position: relative; width: 154px; height: 52px; margin-right: 4px; flex: none; }
.picker select { display: block; appearance: none; width: 100%; height: 100%; border: 2px solid #e3e6ea; border-radius: 9px; background: #f6f8fa; font-size: 35px; line-height: 44px; padding: 0 28px 5px 11px; color: #222; }
.picker select.roomy { font-size: 40px; padding-left: 20px; }
.picker svg { position: absolute; right: 11px; top: 19px; pointer-events: none; }
.stat { padding-bottom: 5px; }
.stat.first { margin-right: 46px; }
.stat.second { margin-right: 48px; }
.stat.macd { margin-right: 3px; }
.stat.dea { color: #e0a04a; font-size: 38px; }
.stat.m { color: #c43fd0; }
.panel-plot { position: relative; height: 141px; margin-left: 13px; border: 2px solid #e2e2e2; border-right: 0; border-bottom-color: #ddd; }
.grid { stroke: #ccc; stroke-width: 1; stroke-dasharray: 3 3; vector-effect: non-scaling-stroke; fill: none; }
.thin { fill: none; stroke-width: 2; vector-effect: non-scaling-stroke; }
.scale { position: absolute; left: 3px; font-size: 36px; line-height: 36px; color: #999; }
.scale.top { top: 3px; }
.scale.bottom { bottom: 5px; }
.expand { position: absolute; right: 14px; top: 13px; width: 80px; height: 80px; border-radius: 50%; background: #fbefe8; display: flex; align-items: center; justify-content: center; }
.hours { display: flex; height: 72px; padding: 3px 2px 0 0; margin-left: 14px; font-size: 46px; line-height: 62px; color: #999; }
.hours span:first-child { flex: 3 1 0; }
.hours span:last-child { flex: 4 1 0; text-align: right; }

.side { flex: 402 1 0; min-width: 0; display: flex; flex-direction: column; }
.side-tabs { display: flex; margin: 7px 7px 0; }
.side-tabs button { flex: 1; height: 70px; border-radius: 9px; font-size: 39px; line-height: 60px; padding-bottom: 4px; color: #666; }
.side-tabs .on { background: #fdede5; color: #e4642e; font-weight: 700; }
.segment { display: flex; margin: 7px 11px 0; background: #f7f7fa; border-radius: 9px; }
.segment button { flex: 1; height: 70px; font-size: 39px; line-height: 60px; padding-bottom: 4px; color: #666; border-radius: 9px; }
.segment .on { background: #fefefe; border: 2px solid #e2e2e2; font-weight: 700; color: #333; }
.best { display: flex; height: 70px; line-height: 66px; padding: 0 7px 0 8px; color: #666; }
.best span { flex: 1; font-size: 40px; }
.best em { width: 124px; text-align: right; font-size: 41px; color: #222; }
.ratio { height: 7px; margin: 0 7px; background: linear-gradient(120deg, #d9534f 20%, #74b45a 20%); }
.deals-head { display: flex; align-items: center; justify-content: center; gap: 12px; height: 68px; border-top: 2px solid #e5e5e5; font-size: 41px; color: #666; padding: 0 0 4px 36px; }
.deals { border-collapse: collapse; width: 100%; height: 997px; table-layout: fixed; }
.deals td { padding: 0 0 5px; line-height: 50px; vertical-align: middle; }
.deals .time { padding-left: 8px; color: #666; }
.cost { text-align: right; }
.deals .dir { width: 24px; padding-left: 3px; }
.deals .amount { width: 108px; padding-right: 7px; text-align: right; }
.deals .amount.long { font-size: 32px; }
.more-deals { display: flex; align-items: center; justify-content: center; gap: 10px; height: 66px; margin: 0 12px 10px; border: 2px solid #e3e3e3; border-radius: 9px; font-size: 36px; color: #666; padding-bottom: 4px; }

.queues { display: flex; height: 176px; overflow: hidden; border-bottom: 2px solid #ddd; }
.queue { flex: 1; min-width: 0; }
.queue + .queue { border-left: 1px solid #ddd; }
.queue-head { display: flex; height: 70px; line-height: 62px; padding: 0 9px 0 11px; border-bottom: 2px solid #ddd; color: #222; }
.queue-head > * { flex: 1; }
.queue-head b { text-align: center; }
.queue-head em { text-align: right; }
.lots { display: grid; grid-template-columns: repeat(4, 1fr); grid-auto-rows: 70px; line-height: 62px; padding-right: 3px; }
.lots span { text-align: right; }

.dock { display: flex; height: 158px; background: #f7f8fa; color: #666; }
.index { flex: 320 1 0; display: flex; flex-direction: column; align-items: center; justify-content: flex-start; padding-top: 8px; }
.points { font-size: 48px; line-height: 64px; }
.index-row { display: flex; gap: 48px; line-height: 54px; padding-left: 46px; }
.item { flex: 236 1 0; display: flex; flex-direction: column; align-items: center; justify-content: flex-start; padding-top: 11px; font-size: 40px; }
.item span { line-height: 76px; margin-top: 2px; }

.sysnav { display: flex; justify-content: center; align-items: flex-start; gap: 209px; height: 138px; padding-top: 38px; background: #fbfbfb; }
</style>
